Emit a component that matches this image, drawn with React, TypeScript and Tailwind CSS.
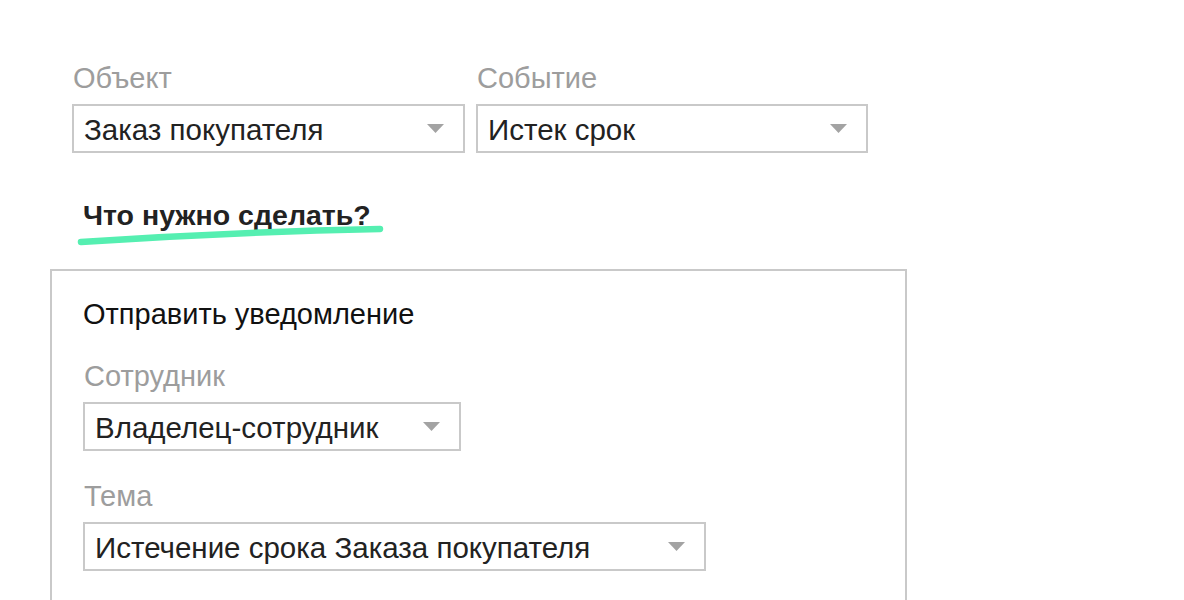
import React from 'react';

const font = { fontFamily: '"Liberation Sans", Arial, sans-serif' };

function Arrow() {
  return (
    <svg width="17" height="9" viewBox="0 0 17 9" className="shrink-0">
      <path d="M0 0 H17 L8.5 9 Z" fill="#a3a3a3" />
    </svg>
  );
}

function Select({ value, width }: { value: string; width: string }) {
  return (
    <div
      className={`flex h-[49px] items-center justify-between border-2 border-[#c9c9c9] bg-white pl-[10px] pr-[19px] ${width}`}
    >
      <span className="pt-[3px] text-[29.5px] leading-[32px] text-[#222]">{value}</span>
      <Arrow />
    </div>
  );
}

function Field({ label, value, width }: { label: string; value: string; width: string }) {
  return (
    <div className="flex flex-col">
      <div className="mb-[10px] pl-px text-[29px] leading-[32px] text-[#9d9d9d]">{label}</div>
      <Select value={value} width={width} />
    </div>
  );
}

export default function App() {
  return (
    <div className="h-[600px] w-[1184px] overflow-hidden bg-white" style={font}>
      <div className="ml-[72px] mt-[62px] flex gap-[11px]">
        <Field label="Объект" value="Заказ покупателя" width="w-[393px]" />
        <Field label="Событие" value="Истек срок" width="w-[392px]" />
      </div>

      <div className="relative ml-[83px] mt-[46px] w-fit">
        <h2 className="text-[28.5px] font-bold leading-[32px] text-[#222]">Что нужно сделать?</h2>
        <svg
          width="320"
          height="30"
          viewBox="0 0 320 30"
          className="pointer-events-none absolute left-[-13px] top-[22px]"
        >
          <path
            d="M11 21 Q160 11 310 8"
            fill="none"
            stroke="#55efb1"
            strokeWidth="6.5"
            strokeLinecap="round"
          />
        </svg>
      </div>

      <div className="ml-[50px] mt-[38px] h-[400px] w-[857px] border-2 border-[#c9c9c9] pl-[31px] pt-[27px]">
        <div className="text-[29px] leading-[32px] text-[#111]">Отправить уведомление</div>
        <div className="mt-[30px]">
          <Field label="Сотрудник" value="Владелец-сотрудник" width="w-[378px]" />
        </div>
        <div className="mt-[29px]">
          <Field label="Тема" value="Истечение срока Заказа покупателя" width="w-[623px]" />
        </div>
      </div>
    </div>
  );
}
